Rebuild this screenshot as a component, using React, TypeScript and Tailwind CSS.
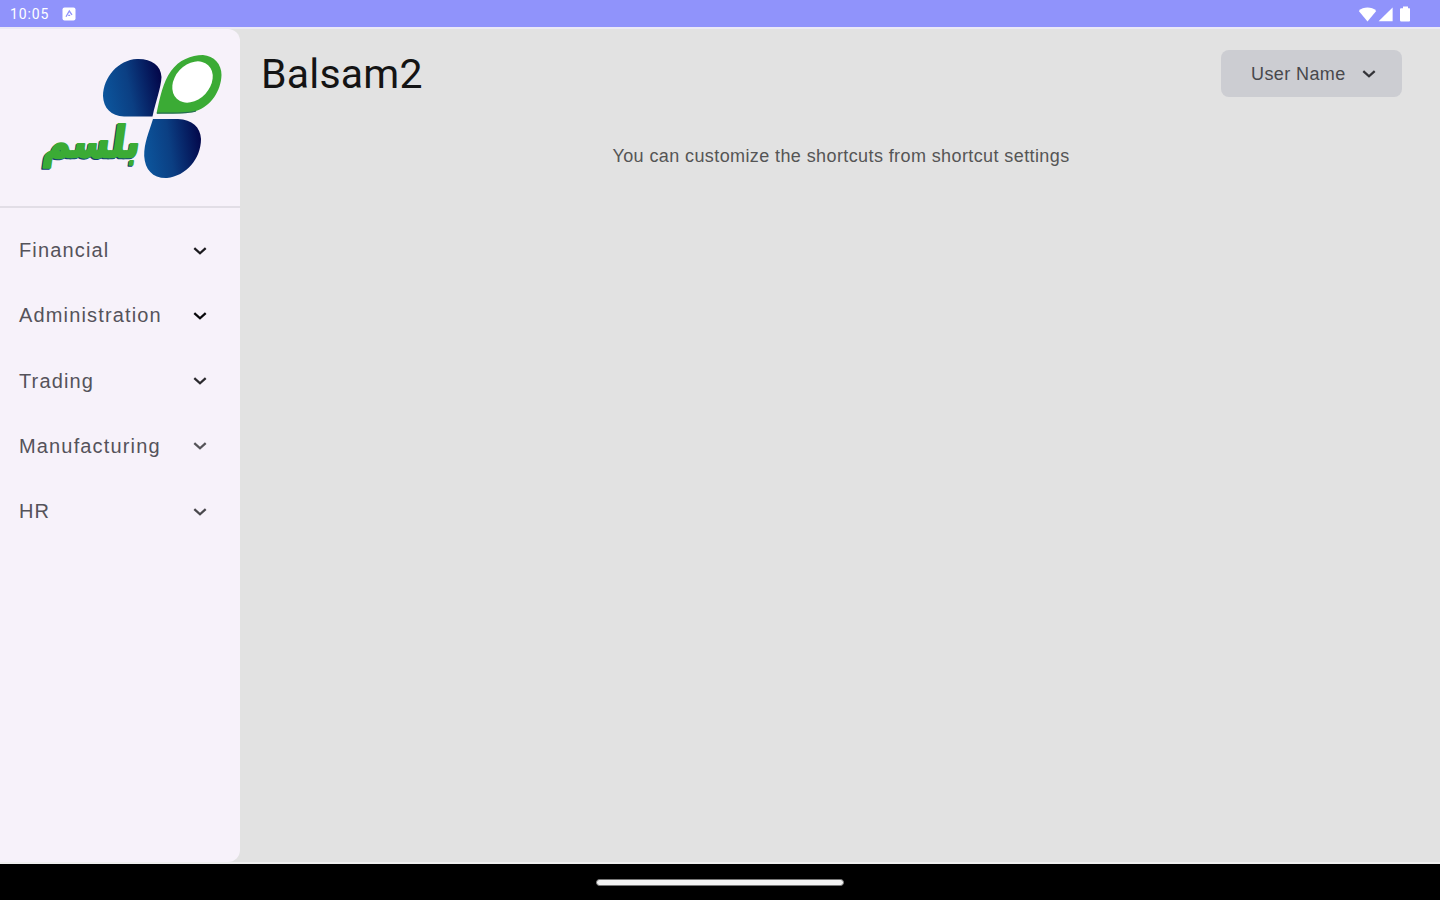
const sections = [
  { label: 'Financial', tone: 'text-[#1c1b1f]' },
  { label: 'Administration', tone: 'text-[#08080a]' },
  { label: 'Trading', tone: 'text-[#2b2a2e]' },
  { label: 'Manufacturing', tone: 'text-[#555458]' },
  { label: 'HR', tone: 'text-[#4a494d]' },
];

function Chevron({ className }: { className?: string }) {
  return (
    <svg viewBox="0 0 14 10" className={className} fill="none" stroke="currentColor" strokeWidth="2.3">
      <path d="M1.3 2.2 7 7.3l5.7-5.1" />
    </svg>
  );
}

function StatusBar() {
  return (
    <div className="flex h-[27px] shrink-0 items-center bg-[#9093fb] pl-[10px] pr-[30px] text-white">
      <span className="w-[52px] text-[14px] leading-none tracking-[0.9px]">10:05</span>
      <svg viewBox="0 0 14 14" className="h-[14px] w-[14px]">
        <rect x="0.5" y="0.5" width="13" height="13" rx="2" fill="#fff" />
        <path d="M4 9.8 7.3 4l2.7 3.8M6.2 8.4h2" stroke="#9093fb" strokeWidth="1.3" fill="none" />
      </svg>
      <svg viewBox="0 0 54 18" className="ml-auto mt-px h-[18px] w-[54px]" fill="#fff">
        <path d="M2.8 5.9C7.300 1.500 15.700 1.500 20.200 5.900L11.500 16.500Z" />
        <path d="M36.600 2.600v13.600H22.600Z" />
        <path d="M45 3.200h2V1.600h5v1.600h1.200q1 0 1 1v11q0 1.200-1 1.200H45.300q-1.300 0-1.300-1.200V4.200q0-1 1-1Z" />
      </svg>
    </div>
  );
}

function Logo() {
  return (
    <svg viewBox="0 0 240 178" className="block h-[178px] w-[240px]">
      <defs>
        <linearGradient id="petalTop" x1="0" y1="0.6" x2="1" y2="0.4">
          <stop offset="0" stopColor="#0c559c" />
          <stop offset="0.45" stopColor="#0b3f83" />
          <stop offset="1" stopColor="#03074a" />
        </linearGradient>
        <linearGradient id="petalBottom" x1="0" y1="0.55" x2="1" y2="0.4">
          <stop offset="0" stopColor="#0c559c" />
          <stop offset="0.45" stopColor="#0b3f83" />
          <stop offset="1" stopColor="#03094c" />
        </linearGradient>
      </defs>
      <path d="M152.500 87.500C156 71 161 59 161.500 48C161 36 151 29.500 137 30C118 31 103.500 48 103 67C103.500 79 111 87 124 87.500Z" fill="url(#petalTop)" />
      <path d="M153 90C149 103 144 114 144.200 127C145 141 153 149.500 167 149C186 147 201 130 201 110C200.500 98 192 90.500 178 90Z" fill="url(#petalBottom)" />
      <path d="M156.500 84.500C160 68 163 53 171 42C179 31 191 26 203 26C214 27 221.500 35 221.500 46C221 62 211 77 196 82C189 85 172 84 156.500 84.500Z" fill="#3bab35" />
      <path d="M157 84.200C172 84 188 84.800 196 82" fill="none" stroke="#246b52" strokeWidth="1.200" />
      <ellipse cx="192.500" cy="53" rx="23" ry="17.500" transform="rotate(-47 192.500 53)" fill="#fff" />
      <g
        transform="translate(42.500 127.500) skewX(-8)"
        fontFamily="DejaVu Sans, sans-serif"
        fontWeight="700"
        fontSize="43"
        strokeWidth="2.600"
        strokeLinejoin="round"
      >
        <text x="-1" y="1.200" textLength="96" lengthAdjust="spacingAndGlyphs" fill="#123f75" stroke="#123f75">بلسم</text>
        <text x="0" y="0" textLength="96" lengthAdjust="spacingAndGlyphs" fill="#3bab35" stroke="#3bab35">بلسم</text>
      </g>
    </svg>
  );
}

export default function App() {
  return (
    <div className="flex h-[900px] w-[1440px] flex-col overflow-hidden bg-[#e2e2e2] font-['Roboto','Liberation_Sans',sans-serif]">
      <StatusBar />
      <div className="flex min-h-0 flex-1 border-y-2 border-[#efefef] border-t-[#ebe9f6]">
        <aside className="flex w-[240px] shrink-0 flex-col rounded-r-[12px] bg-[#f7f2fa]">
          <div className="h-[179px] shrink-0 border-b-2 border-[#e2dee6]">
            <Logo />
          </div>
          <nav className="flex flex-col pt-[10px]">
            {sections.map(({ label, tone }) => (
              <button key={label} className="flex h-[65.25px] items-center justify-between pl-[19px] pr-[33px]">
                <span className="pb-px font-['Liberation_Sans',sans-serif] text-[20px] leading-none tracking-[1.15px] text-[#55535a]">{label}</span>
                <Chevron className={`h-[10px] w-[14px] ${tone}`} />
              </button>
            ))}
          </nav>
        </aside>
        <main className="flex flex-1 flex-col">
          <header className="flex items-start justify-between pl-[21px] pr-[38px] pt-[21px]">
            <h1 className="text-[41px] leading-[48px] tracking-[0.2px] text-[#141414]">Balsam2</h1>
            <button className="flex h-[47px] w-[181px] items-center rounded-[8px] bg-[#cccdd2] pl-[30px] text-[#48484c]">
              <span className="w-[97px] whitespace-nowrap text-left font-['Liberation_Sans',sans-serif] text-[18px] leading-none tracking-[0.4px]">User Name</span>
              <Chevron className="ml-[14px] h-[10px] w-[14px] text-[#333338]" />
            </button>
          </header>
          <p className="mt-[46px] pl-[2px] text-center font-['Liberation_Sans',sans-serif] text-[18px] leading-[24px] tracking-[0.4px] text-[#555]">
            You can customize the shortcuts from shortcut settings
          </p>
        </main>
      </div>
      <footer className="flex h-[36px] shrink-0 items-center justify-center bg-black">
        <div className="h-[7px] w-[248px] rounded-full border border-[#777] bg-[#f2f2f2]" />
      </footer>
    </div>
  );
}
